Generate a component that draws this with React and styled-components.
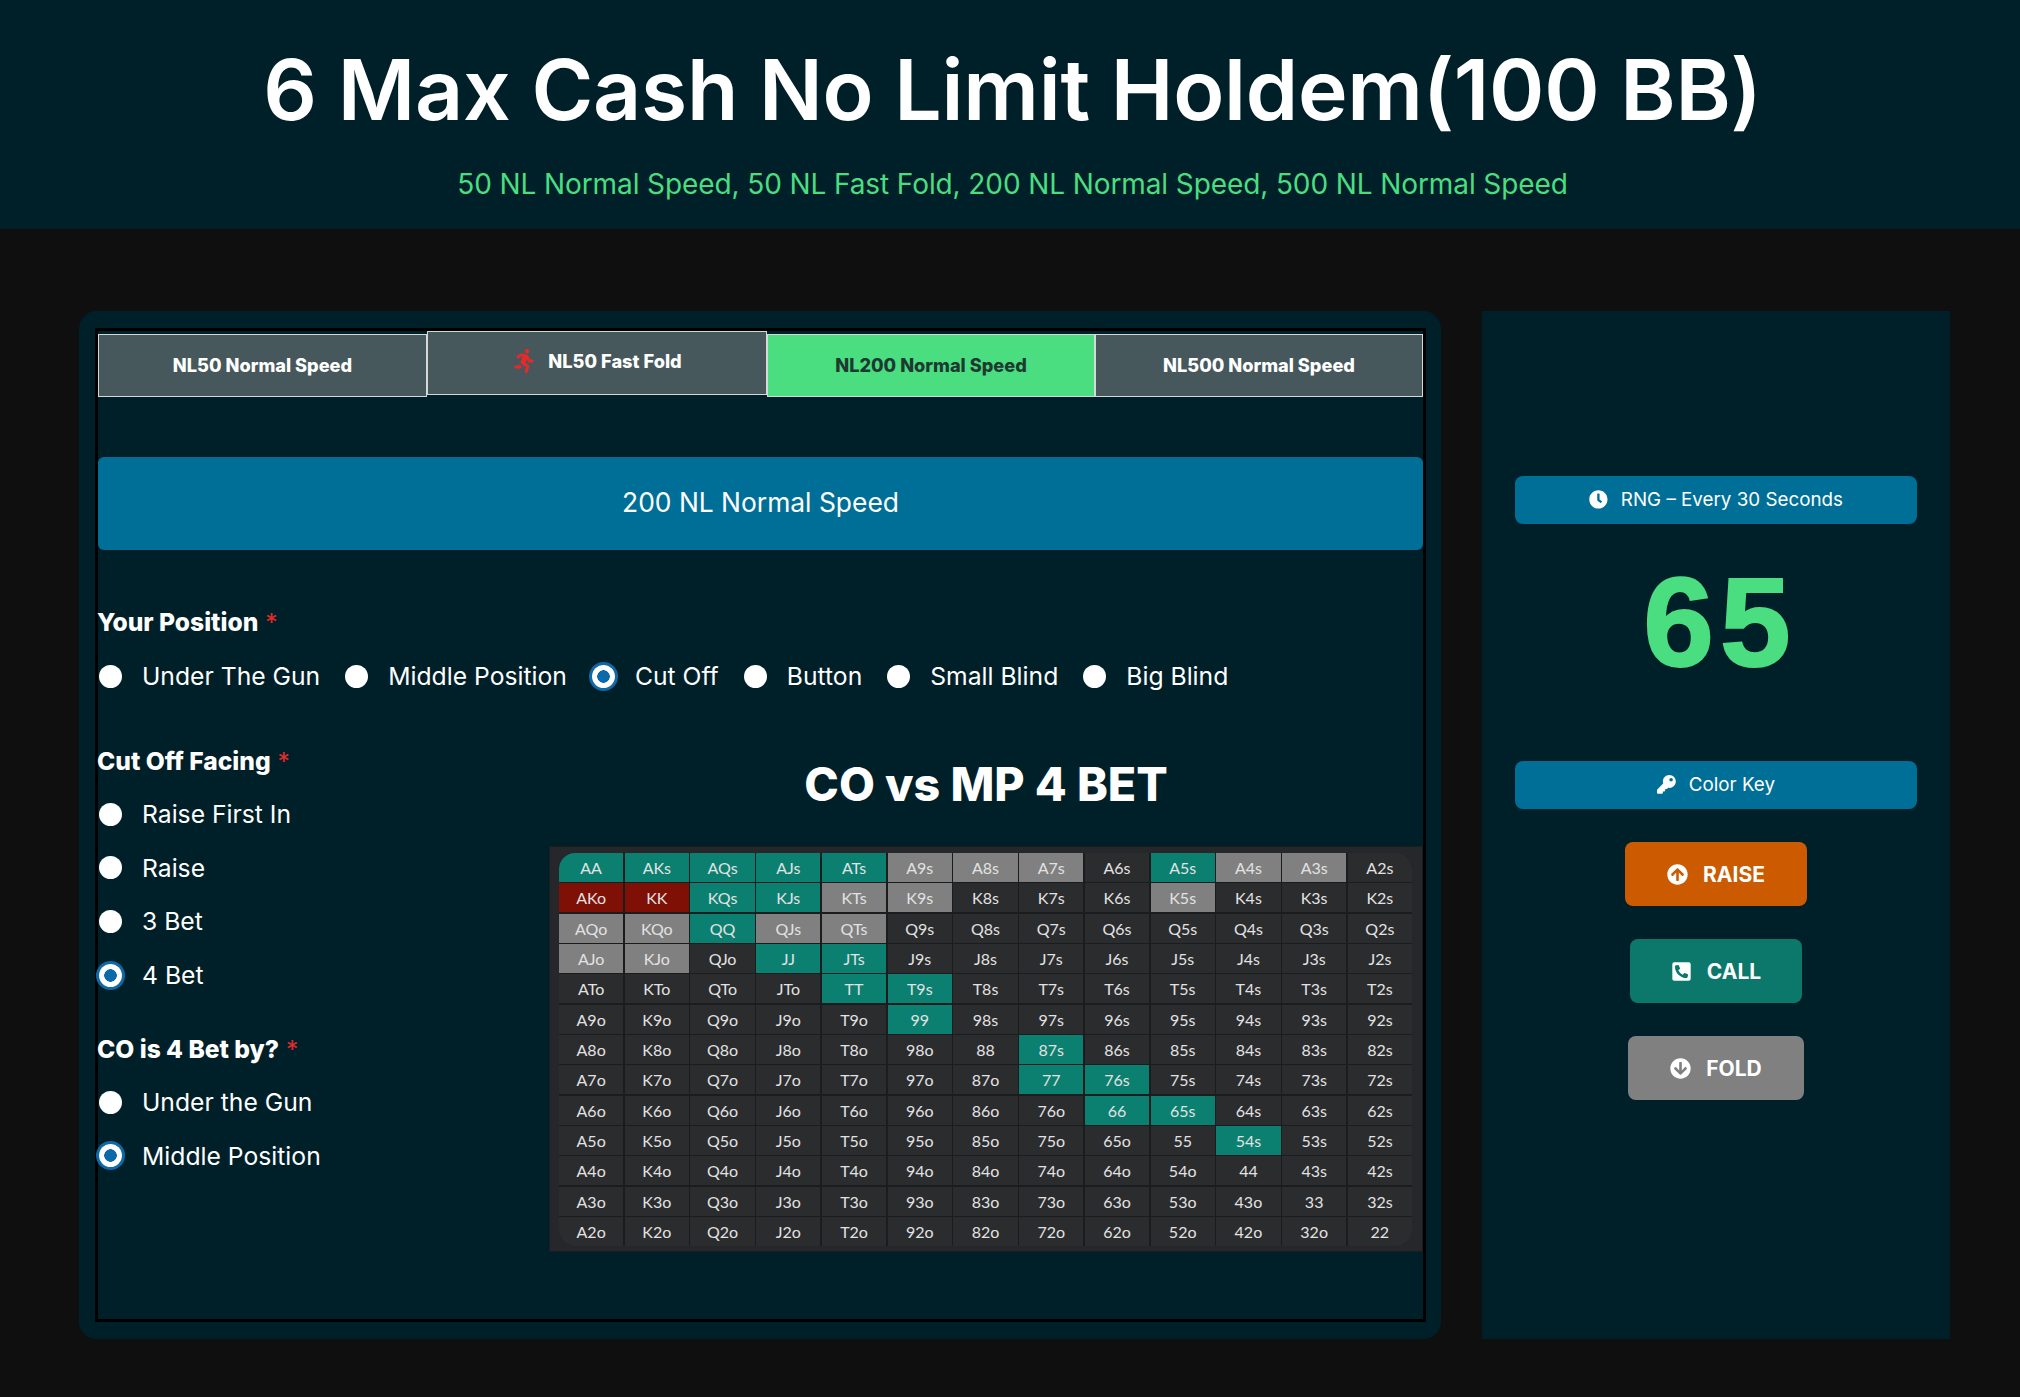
import React from "react";
import styled, { createGlobalStyle } from "styled-components";
import {
  FaArrowCircleDown,
  FaArrowCircleUp,
  FaClock,
  FaKey,
  FaPhoneSquareAlt,
  FaRunning,
} from "react-icons/fa";

const Global = createGlobalStyle`
  * { box-sizing: border-box; }
  body {
    margin: 0;
    background: #0f0f0f;
    color: #fff;
    font-family: "Inter", "Liberation Sans", sans-serif;
  }
`;

const Header = styled.header`
  height: 229px;
  background: #002029;
  padding: 40px 0 0 5px;
  text-align: center;
`;

const Title = styled.h1`
  margin: 0;
  font-size: 84px;
  line-height: 100px;
  font-weight: 600;
  letter-spacing: -0.25px;
`;

const Subtitle = styled.p`
  margin: 26px 0 0;
  font-size: 28px;
  line-height: 36px;
  font-weight: 400;
  letter-spacing: -0.1px;
  color: #4ade80;
`;

const Main = styled.main`
  display: flex;
  gap: 41px;
  padding: 82px 70px 58px 79px;
`;

const Panel = styled.section`
  width: 1362px;
  height: 1028px;
  padding: 17px 15px 17px 16px;
  background: #002029;
  border-radius: 18px;
`;

const Frame = styled.div`
  height: 100%;
  border: 3px solid #000;
  padding-top: 3px;
`;

const Tabs = styled.div`
  display: flex;
  align-items: flex-start;
`;

const Tab = styled.button`
  flex: ${({ $w }) => ($w ? `0 0 ${$w}px` : "1")};
  height: ${({ $raised }) => ($raised ? 64 : 63)}px;
  margin-top: ${({ $raised }) => ($raised ? -3 : 0)}px;
  display: flex;
  align-items: center;
  justify-content: center;
  gap: 12px;
  padding: 0 0 ${({ $raised }) => ($raised ? 4 : 2)}px;
  border: 1px solid #d4d8d8;
  background: ${({ $active }) => ($active ? "#4ade80" : "#46585c")};
  color: ${({ $active }) => ($active ? "#1d3a30" : "#fff")};
  font: 800 18.2px "Inter", sans-serif;
  svg {
    color: #e62a2a;
    font-size: 24px;
  }
`;

const Banner = styled.div`
  height: 93px;
  margin-top: 60px;
  padding-bottom: 4px;
  display: flex;
  align-items: center;
  justify-content: center;
  background: #006f98;
  border-radius: 6px;
  font-size: 26.4px;
`;

const GroupLabel = styled.div`
  height: 36px;
  margin: ${({ $top }) => $top}px 0 0 -1px;
  font-size: 24.6px;
  font-weight: 800;
  line-height: 34px;
  span {
    color: #e02b2b;
    font-weight: 400;
  }
`;

const PositionRow = styled.div`
  display: flex;
  gap: 24px;
  margin-top: 17px;
`;

const Option = styled.label`
  display: flex;
  align-items: center;
  gap: 20px;
  height: 36px;
  padding-left: 1px;
  font-size: 24.7px;
`;

const Radio = styled.input.attrs({ type: "radio", readOnly: true })`
  appearance: none;
  flex: none;
  width: 23px;
  height: 23px;
  margin: 0;
  border-radius: 50%;
  background: #fff;
  &:checked {
    background: radial-gradient(circle, #0a6aaa 0 6px, #fff 6.5px);
    box-shadow: 0 0 0 3px #0a6aaa;
  }
`;

const Columns = styled.div`
  display: flex;
  margin-top: 50px;
`;

const LeftColumn = styled.div`
  flex: 0 0 451px;
`;

const OptionStack = styled.div`
  display: flex;
  flex-direction: column;
  gap: 17.7px;
  margin-top: 16px;
`;

const ChartColumn = styled.div`
  flex: 1;
  padding-top: 10px;
`;

const ChartTitle = styled.h2`
  margin: 0;
  height: 60px;
  font-size: 46.5px;
  font-weight: 800;
  line-height: 60px;
  text-align: center;
`;

const Chart = styled.div`
  height: 406px;
  margin-top: 32px;
  padding: 6px 10px 5px 9px;
  background: #25272a;
  border: 1px solid #1a1d1f;
`;

const ChartGrid = styled.div`
  height: 100%;
  display: grid;
  grid-template-columns: repeat(13, 1fr);
  grid-template-rows: repeat(13, 1fr);
  gap: 1.5px;
  background: #1b1c1e;
  border-radius: 16px;
  overflow: hidden;
`;

const cellColors = {
  teal: "#0b8071",
  red: "#7e1005",
  gray: "#808080",
  none: "#2b2c2e",
};

const Cell = styled.div`
  display: flex;
  align-items: center;
  justify-content: center;
  background: ${({ $kind }) => cellColors[$kind]};
  color: #e2e2e2;
  font: 400 16px "Lato", sans-serif;
`;

const SidePanel = styled.aside`
  width: 468px;
  height: 1028px;
  padding: 165px 33px 0;
  display: flex;
  flex-direction: column;
  align-items: center;
  background: #002029;
`;

const InfoBar = styled.div`
  width: 100%;
  height: 48px;
  padding-bottom: 1px;
  display: flex;
  align-items: center;
  justify-content: center;
  gap: 13px;
  background: #006f98;
  border-radius: 8px;
  font-size: 18.8px;
`;

const Counter = styled.div`
  height: 237px;
  padding: 23px 0 0 8px;
  color: #4ade80;
  font: 700 127px/150px "Liberation Sans", sans-serif;
  letter-spacing: 6px;
  -webkit-text-stroke: 2px #4ade80;
`;

const Actions = styled.div`
  display: flex;
  flex-direction: column;
  align-items: center;
  gap: 33px;
  margin-top: 33px;
`;

const ActionButton = styled.button`
  width: ${({ $w }) => $w}px;
  height: 64px;
  display: flex;
  align-items: center;
  justify-content: center;
  gap: 15px;
  padding-bottom: 1px;
  border: 0;
  border-radius: 8px;
  background: ${({ $bg }) => $bg};
  color: #fff;
  font: 700 21px "Inter", sans-serif;
  svg {
    font-size: 21px;
  }
`;

const ranks = "AKQJT98765432".split("");
const teal = "AA AKs AQs AJs ATs A5s KQs KJs QQ JJ JTs TT T9s 99 87s 77 76s 66 65s 54s".split(" ");
const red = ["AKo", "KK"];
const gray = "A9s A8s A7s A4s A3s KTs K9s K5s AQo KQo QJs QTs AJo KJo".split(" ");

const handName = (row, col) => {
  if (row === col) return ranks[row] + ranks[col];
  return row < col ? ranks[row] + ranks[col] + "s" : ranks[col] + ranks[row] + "o";
};

const handKind = (hand) => {
  if (teal.includes(hand)) return "teal";
  if (red.includes(hand)) return "red";
  if (gray.includes(hand)) return "gray";
  return "none";
};

const hands = ranks.flatMap((_, row) => ranks.map((_, col) => handName(row, col)));

const RadioOption = ({ name, label, checked }) => (
  <Option>
    <Radio name={name} defaultChecked={checked} />
    {label}
  </Option>
);

const Required = () => <span> *</span>;

export default function App() {
  return (
    <>
      <Global />
      <Header>
        <Title>6 Max Cash No Limit Holdem(100 BB)</Title>
        <Subtitle>50 NL Normal Speed, 50 NL Fast Fold, 200 NL Normal Speed, 500 NL Normal Speed</Subtitle>
      </Header>
      <Main>
        <Panel>
          <Frame>
            <Tabs>
              <Tab $w={329}>NL50 Normal Speed</Tab>
              <Tab $w={340} $raised>
                <FaRunning />
                NL50 Fast Fold
              </Tab>
              <Tab $w={328} $active>NL200 Normal Speed</Tab>
              <Tab>NL500 Normal Speed</Tab>
            </Tabs>
            <Banner>200 NL Normal Speed</Banner>
            <GroupLabel $top={55}>Your Position<Required /></GroupLabel>
            <PositionRow>
              <RadioOption name="pos" label="Under The Gun" />
              <RadioOption name="pos" label="Middle Position" />
              <RadioOption name="pos" label="Cut Off" checked />
              <RadioOption name="pos" label="Button" />
              <RadioOption name="pos" label="Small Blind" />
              <RadioOption name="pos" label="Big Blind" />
            </PositionRow>
            <Columns>
              <LeftColumn>
                <GroupLabel $top={0}>Cut Off Facing<Required /></GroupLabel>
                <OptionStack>
                  <RadioOption name="facing" label="Raise First In" />
                  <RadioOption name="facing" label="Raise" />
                  <RadioOption name="facing" label="3 Bet" />
                  <RadioOption name="facing" label="4 Bet" checked />
                </OptionStack>
                <GroupLabel $top={39}>CO is 4 Bet by?<Required /></GroupLabel>
                <OptionStack>
                  <RadioOption name="by" label="Under the Gun" />
                  <RadioOption name="by" label="Middle Position" checked />
                </OptionStack>
              </LeftColumn>
              <ChartColumn>
                <ChartTitle>CO vs MP 4 BET</ChartTitle>
                <Chart>
                  <ChartGrid>
                    {hands.map((hand) => (
                      <Cell key={hand} $kind={handKind(hand)}>{hand}</Cell>
                    ))}
                  </ChartGrid>
                </Chart>
              </ChartColumn>
            </Columns>
          </Frame>
        </Panel>
        <SidePanel>
          <InfoBar><FaClock />RNG – Every 30 Seconds</InfoBar>
          <Counter>65</Counter>
          <InfoBar><FaKey />Color Key</InfoBar>
          <Actions>
            <ActionButton $w={182} $bg="#cc5a00"><FaArrowCircleUp />RAISE</ActionButton>
            <ActionButton $w={172} $bg="#0c786c"><FaPhoneSquareAlt />CALL</ActionButton>
            <ActionButton $w={176} $bg="#808080"><FaArrowCircleDown />FOLD</ActionButton>
          </Actions>
        </SidePanel>
      </Main>
    </>
  );
}
